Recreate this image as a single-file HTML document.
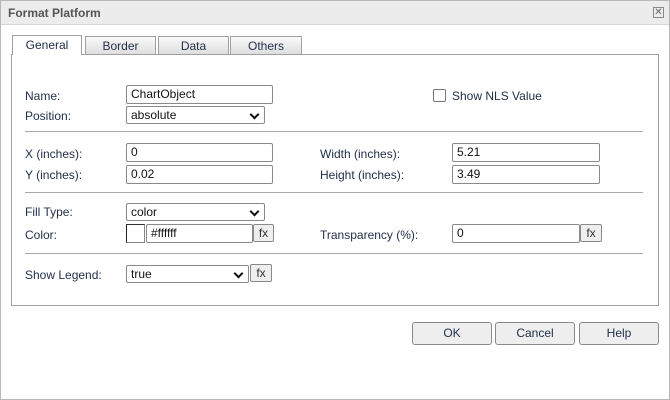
<!DOCTYPE html>
<html><head><style>
*{box-sizing:border-box;margin:0;padding:0}
body{width:670px;height:400px;background:#fff;font-family:"Liberation Sans",sans-serif;font-size:12px;color:#22304a;position:relative;overflow:hidden}
.a{position:absolute}
.dlg{left:0;top:0;width:670px;height:400px;border:1px solid #b8b8b8}
.title{left:1px;top:1px;width:668px;height:24px;background:#ececec;border-bottom:1px solid #d6d6d6}
.tt{left:8px;top:6px;font-weight:bold;color:#555;font-size:12px}
.close{left:653px;top:7px;width:11px;height:11px;border:1px solid #888;font-size:10px;line-height:9px;text-align:center;color:#666}
.panel{left:11px;top:54px;width:648px;height:252px;border:1px solid #a0a0a0}
.tab{top:36px;height:19px;border:1px solid #a0a0a0;border-bottom:none;background:linear-gradient(#fafafa,#dcdcdc);text-align:center;line-height:18px;color:#22304a}
.tab.on{background:#fff;height:20px;top:35px;z-index:2}
.lbl{line-height:14px}
.in{border:1px solid #8a8a8a;border-radius:2px;height:19px;padding-left:4px;line-height:17px;background:#fff;color:#111}
.sel:after{content:"";position:absolute;right:6px;top:4px;width:5px;height:5px;border-right:2px solid #111;border-bottom:2px solid #111;transform:rotate(45deg)}
.fx{border:1px solid #8a8a8a;border-radius:2px;background:#eee;height:19px;text-align:center;line-height:16px;color:#333}
.hr{left:25px;width:618px;height:1px;background:#a8a8a8}
.btn{top:322px;height:23px;width:80px;border:1px solid #8a8a8a;border-radius:3px;background:#eee;text-align:center;line-height:21px;color:#22304a}
</style></head><body>
<div class="a dlg"></div>
<div class="a title"></div>
<div class="a tt">Format Platform</div>
<div class="a close">✕</div>
<div class="a tab on" style="left:12px;width:70px">General</div>
<div class="a tab" style="left:85px;width:71px">Border</div>
<div class="a tab" style="left:158px;width:71px">Data</div>
<div class="a tab" style="left:230px;width:72px">Others</div>
<div class="a panel"></div>

<div class="a lbl" style="left:25px;top:89px">Name:</div>
<div class="a in" style="left:126px;top:85px;width:147px">ChartObject</div>
<div class="a" style="left:433px;top:89px;width:13px;height:13px;border:1px solid #777;border-radius:2px"></div>
<div class="a lbl" style="left:452px;top:89px">Show NLS Value</div>
<div class="a lbl" style="left:25px;top:109px">Position:</div>
<div class="a in sel" style="left:126px;top:106px;width:139px;height:18px;line-height:16px">absolute</div>
<div class="a hr" style="top:131px"></div>

<div class="a lbl" style="left:25px;top:147px">X (inches):</div>
<div class="a in" style="left:126px;top:143px;width:147px">0</div>
<div class="a lbl" style="left:320px;top:147px">Width (inches):</div>
<div class="a in" style="left:452px;top:143px;width:148px">5.21</div>
<div class="a lbl" style="left:25px;top:168px">Y (inches):</div>
<div class="a in" style="left:126px;top:165px;width:147px">0.02</div>
<div class="a lbl" style="left:320px;top:168px">Height (inches):</div>
<div class="a in" style="left:452px;top:165px;width:148px">3.49</div>
<div class="a hr" style="top:192px"></div>

<div class="a lbl" style="left:25px;top:205px">Fill Type:</div>
<div class="a in sel" style="left:126px;top:203px;width:139px;height:18px;line-height:16px">color</div>
<div class="a lbl" style="left:25px;top:228px">Color:</div>
<div class="a" style="left:126px;top:224px;width:19px;height:19px;border:1px solid #888;border-left-color:#222;border-top-color:#333;background:#fff"></div>
<div class="a in" style="left:146px;top:224px;width:107px">#ffffff</div>
<div class="a fx" style="left:253px;top:224px;width:21px;height:18px">fx</div>
<div class="a lbl" style="left:320px;top:228px">Transparency (%):</div>
<div class="a in" style="left:452px;top:224px;width:128px">0</div>
<div class="a fx" style="left:580px;top:224px;width:22px;height:18px">fx</div>
<div class="a hr" style="top:253px"></div>

<div class="a lbl" style="left:25px;top:268px">Show Legend:</div>
<div class="a in sel" style="left:126px;top:265px;width:123px;height:18px;line-height:16px">true</div>
<div class="a fx" style="left:250px;top:264px;width:22px;height:18px">fx</div>

<div class="a btn" style="left:412px">OK</div>
<div class="a btn" style="left:495px">Cancel</div>
<div class="a btn" style="left:579px">Help</div>
</body></html>
